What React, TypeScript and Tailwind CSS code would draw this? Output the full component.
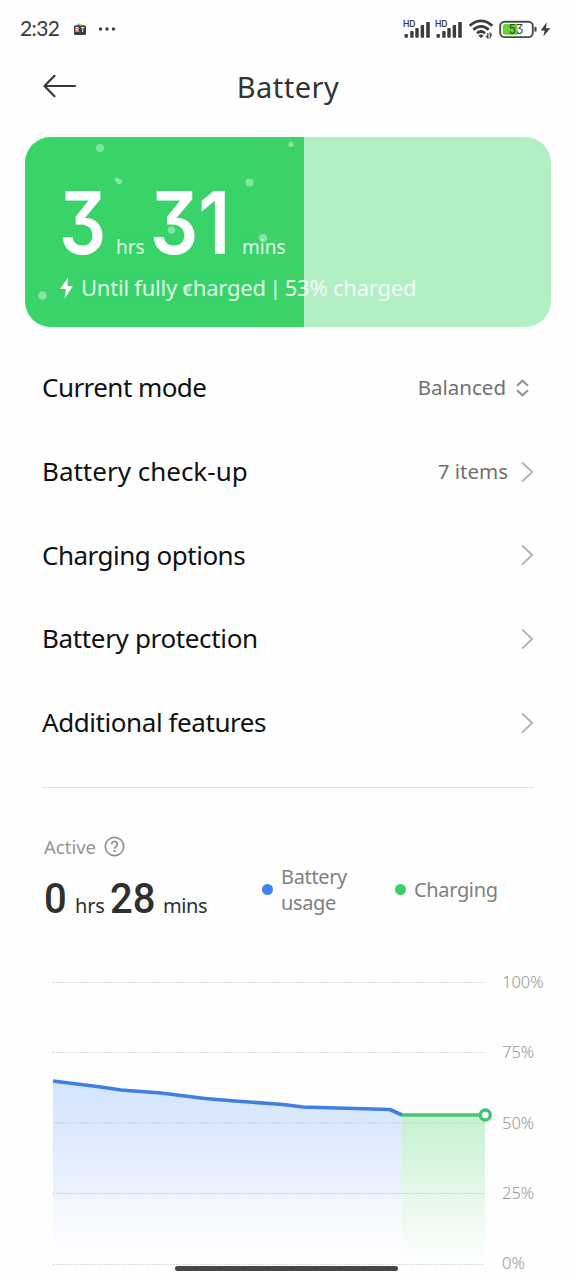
import React from 'react';

const menuItems = [
  { label: 'Current mode', value: 'Balanced', tracking: 'tracking-[-0.55px]', updown: true },
  { label: 'Battery check-up', value: '7 items', tracking: 'tracking-[0px]' },
  { label: 'Charging options', tracking: 'tracking-[-0.5px]' },
  { label: 'Battery protection', tracking: 'tracking-[-0.35px]' },
  { label: 'Additional features', tracking: 'tracking-[-0.43px]' },
];

const bubbles = [
  { x: 75, y: 11, r: 4 },
  { x: 266, y: 7.5, r: 2.7 },
  { x: 94, y: 44.5, r: 2.8 },
  { x: 91.5, y: 42.5, r: 2 },
  { x: 224.5, y: 45.5, r: 4 },
  { x: 146.5, y: 93, r: 3.7 },
  { x: 238, y: 101, r: 4.2 },
  { x: 17.5, y: 158.5, r: 4.3 },
  { x: 162, y: 151.5, r: 4 },
];

const levels = ['100%', '75%', '50%', '25%', '0%'];
const gridLines = [22.5, 92.5, 163, 233.5, 304.5];

function Signal() {
  return (
    <svg className="h-[22px] w-7 shrink-0" viewBox="0 0 28 22" fill="#3c3c3c">
      <text x="0" y="9.3" fontSize="8.6" fontWeight="600" fontFamily="Inter, sans-serif" textLength="12.5">HD</text>
      <rect x="1.5" y="16" width="3.4" height="3.8" rx="0.8" />
      <rect x="7.2" y="13" width="3.4" height="6.8" rx="0.8" />
      <rect x="12.3" y="10" width="3.4" height="9.8" rx="0.8" />
      <rect x="17.7" y="7" width="3.4" height="12.8" rx="0.8" />
      <rect x="23.2" y="4" width="3.6" height="15.8" rx="0.8" />
    </svg>
  );
}

function StatusBar() {
  return (
    <div className="flex h-[58px] items-center text-[#3a3a3a]">
      <span className="ml-5 w-[53px] pb-[3px] font-[Lato] text-[21px] leading-none tracking-[-0.6px]">2:32</span>
      <svg className="h-[14px] w-[14px]" viewBox="0 0 14 14">
        <path d="M2 4.5 6 1l1.5 3.5z" fill="#7f93dc" />
        <path d="M7 1.5 12 3v2H7z" fill="#eadb6c" />
        <rect x="1" y="3.5" width="12" height="9.5" rx="1.2" fill="#3e3b4b" />
        <text x="2.3" y="9.8" fontSize="5.5" fontWeight="700" fill="#fff" fontFamily="Inter, sans-serif" textLength="9">RT</text>
      </svg>
      <svg className="ml-[11px] h-2 w-5" viewBox="0 0 20 8" fill="#3c3c3c">
        <circle cx="2.5" cy="4" r="1.7" />
        <circle cx="9" cy="4" r="1.7" />
        <circle cx="15.5" cy="4" r="1.7" />
      </svg>
      <div className="ml-auto mr-[25px] flex items-center">
        <Signal />
        <span className="w-1" />
        <Signal />
        <svg className="ml-[5px] h-[22px] w-[28px]" viewBox="0 0 28 22" fill="none" stroke="#3c3c3c" strokeWidth="2.8">
          <path d="M1.7 7.7Q13 -2 24.3 7.7" />
          <path d="M5.3 11.7Q13 5 20.7 11.7" />
          <path d="M9 15.2Q13 11.8 17 15.2" />
          <path d="M13 20.2l-2.6-2.8q2.6-1.9 5.2 0z" fill="#3c3c3c" stroke="none" />
          <path d="M19.8 15v4.8l-1.8-1.8M22.2 20.3v-4.8l1.8 1.8" strokeWidth="1.2" />
        </svg>
        <svg className="ml-[3px] h-[19px] w-[39px]" viewBox="0 0 39 18">
          <rect x="1.2" y="1.2" width="32.6" height="15.4" rx="4.4" fill="#fff" stroke="#4b4b4b" strokeWidth="1.9" />
          <path d="M6 3.6h12.5v10.6H6a2.2 2.2 0 0 1-2.2-2.2V5.8A2.2 2.2 0 0 1 6 3.6z" fill="#62d42e" />
          <rect x="35.4" y="6.3" width="2.2" height="5" rx="1.1" fill="#4b4b4b" />
          <text x="9.8" y="13.6" fontSize="13" fill="#3c3c3c" fontFamily="Inter, sans-serif" textLength="14.5" lengthAdjust="spacingAndGlyphs" className="[font-feature-settings:'cv09']">53</text>
        </svg>
        <svg className="ml-[2px] h-[15px] w-[11px]" viewBox="0 0 11 15" fill="#3c3c3c">
          <path d="M6.7 0.3 0.7 8.6h4L3.3 14.6 10.4 6.2H6z" />
        </svg>
      </div>
    </div>
  );
}

function BatteryCard() {
  return (
    <div className="relative mx-[25px] mt-[21px] h-[190px] overflow-hidden rounded-[26px] bg-[#b3efc5] text-white">
      <div className="absolute inset-y-0 left-0 w-[279px] bg-[#39d369]">
        <div className="ml-auto h-full w-[49px] bg-[#3ed369]" />
      </div>
      <div className="relative flex flex-col pl-9 pt-[43px]">
        <div className="flex h-[85px] items-baseline leading-[86px]">
          <span className="-ml-[2px] w-[57px] font-['Inter'] text-[86px] font-semibold"><span className="inline-block origin-left scale-x-[0.86] [font-feature-settings:'cv09']">3</span></span>
          <span className="w-[34px] font-['Noto_Sans'] text-[19px] opacity-85">hrs</span>
          <span className="w-[92px] font-['Inter'] text-[86px] font-semibold"><span className="inline-block origin-left scale-x-[0.88] [font-feature-settings:'cv09']">31</span></span>
          <span className="font-['Noto_Sans'] text-[19px] opacity-85">mins</span>
        </div>
        <div className="flex h-[46px] items-center">
          <svg className="-ml-px mr-[6px] h-[22px] w-[15px]" viewBox="0 0 15 22" fill="#fff">
            <path d="M8 0.5 0 12h6L4.5 21.5 13 9H7.5z" />
          </svg>
          <span className="whitespace-nowrap pb-[2px] font-['Noto_Sans'] text-[22px] tracking-[-0.22px] opacity-85">
            Until fully charged <span className="-mx-[2px] inline-block scale-y-90">|</span> 53% charged
          </span>
        </div>
      </div>
      <svg className="absolute left-0 top-0" width="279" height="190" fill="#fff" fillOpacity="0.38">
        {bubbles.map((b) => (
          <circle key={b.x} cx={b.x} cy={b.y} r={b.r} />
        ))}
      </svg>
    </div>
  );
}

function Chart() {
  return (
    <div className="flex h-[320px]">
      <svg className="shrink-0" width="496" height="320" viewBox="0 0 496 320">
        <defs>
          <linearGradient id="blueFill" x1="0" y1="120" x2="0" y2="305" gradientUnits="userSpaceOnUse">
            <stop offset="0" stopColor="#d3e5fc" />
            <stop offset="0.3" stopColor="#deeafc" />
            <stop offset="0.62" stopColor="#edf3fe" />
            <stop offset="0.66" stopColor="#f4f8ff" />
            <stop offset="1" stopColor="#ffffff" />
          </linearGradient>
          <linearGradient id="greenFill" x1="0" y1="155" x2="0" y2="305" gradientUnits="userSpaceOnUse">
            <stop offset="0" stopColor="#c6f1d0" />
            <stop offset="0.5" stopColor="#e3f8e8" />
            <stop offset="1" stopColor="#ffffff" />
          </linearGradient>
        </defs>
        <path d="M53 121 101 127 121 130 161 133 205 138.5 235 141 283 144.5 303 147 390 149.5 402 155V305H53z" fill="url(#blueFill)" />
        <path d="M402 155H485V305H402z" fill="url(#greenFill)" />
        {gridLines.map((y) => (
          <path key={y} d={`M53 ${y}H485`} stroke="#a9adb5" strokeOpacity="0.6" strokeDasharray="1.5 1.5" />
        ))}
        <path d="M53 121 101 127 121 130 161 133 205 138.5 235 141 283 144.5 303 147 390 149.5 402 155" fill="none" stroke="#3f7fe3" strokeWidth="3.6" strokeLinejoin="round" />
        <path d="M402 155H480" stroke="#48c676" strokeWidth="3.6" />
        <circle cx="485.3" cy="155" r="5" fill="#fff" stroke="#40c670" strokeWidth="3.4" />
      </svg>
      <div className="ml-[6px] mt-[-13.5px] font-['Noto_Sans'] text-[16.5px] font-light text-[#969696]">
        {levels.map((level) => (
          <div key={level} className="flex h-[70.4px] items-center">{level}</div>
        ))}
      </div>
    </div>
  );
}

export default function App() {
  return (
    <div className="relative h-[1280px] w-[576px] overflow-hidden bg-[#fefefe] font-['Noto_Sans',sans-serif]">
      <StatusBar />

      <div className="relative flex h-[58px] items-center justify-center">
        <svg className="absolute left-[43px] top-[16px] h-6 w-[34px]" viewBox="0 0 34 24" fill="none" stroke="#383838" strokeWidth="2.2" strokeLinecap="round" strokeLinejoin="round">
          <path d="M32 12H2M11.5 1.8 1.5 12l10 10.2" />
        </svg>
        <h1 className="text-[29px] tracking-[0.5px] text-[#333]">Battery</h1>
      </div>

      <BatteryCard />

      <div className="mt-[19px] px-[42px]">
        {menuItems.map((item) => (
          <div key={item.label} className="flex h-[83.7px] items-center">
            <span className={`text-[26px] text-[#111] ${item.tracking}`}>{item.label}</span>
            <span className="ml-auto text-[20.5px] text-[#707070]">{item.value}</span>
            {item.updown ? (
              <svg className="ml-[10px] mr-[5px] h-[18px] w-[13px]" viewBox="0 0 13 18" fill="none" stroke="#8d94a3" strokeWidth="2">
                <path d="M1 6.7 6.5 1.7 12 6.7M1 11.3l5.5 5 5.5-5" />
              </svg>
            ) : (
              <svg className="ml-3 h-[22px] w-[14px]" viewBox="0 0 14 22" fill="none" stroke="#b0b0b0" strokeWidth="1.8">
                <path d="M2 1.3 12.2 11 2 20.7" />
              </svg>
            )}
          </div>
        ))}
        <div className="mt-[22.5px] h-px bg-[#e2e2e2]" />
      </div>

      <div className="flex h-[172.5px] pl-[44px] pt-[46px]">
        <div className="w-[218px]">
          <div className="flex h-[26px] items-center text-[18.5px] text-[#949494]">
            <span className="w-[60px]">Active</span>
            <svg className="h-[21px] w-[21px]" viewBox="0 0 21 21" fill="none" stroke="#8f8f8f" strokeWidth="1.7">
              <circle cx="10.5" cy="10.5" r="9.2" />
              <path d="M7.7 8.3a2.8 2.8 0 1 1 4.2 2.4c-.9.5-1.4.9-1.4 2" />
              <path d="M10.5 14v2" strokeWidth="2" />
            </svg>
          </div>
          <div className="mt-[13px] flex h-[50px] items-baseline leading-[50px] text-[#2f2f2f]">
            <span className="w-[31px] font-[Roboto] text-[43px] font-medium"><span className="inline-block origin-left scale-x-[0.93]">0</span></span>
            <span className="w-[35px] text-[20px] tracking-[-0.2px]">hrs</span>
            <span className="w-[53px] font-[Roboto] text-[43px] font-medium"><span className="inline-block origin-left scale-x-[0.93]">28</span></span>
            <span className="text-[20px] tracking-[-0.4px]">mins</span>
          </div>
        </div>
        <div className="mt-[30px] flex h-[52px] items-center text-[20px] leading-[26px] tracking-[-0.35px] text-[#808080]">
          <span className="mr-2 h-[11px] w-[11px] rounded-full bg-[#3a82f7]" />
          <span className="w-[114px]">Battery<br />usage</span>
          <span className="mr-2 h-[11px] w-[11px] rounded-full bg-[#38d067]" />
          <span>Charging</span>
        </div>
      </div>

      <Chart />

      <div className="absolute bottom-[9px] left-[175px] h-[5px] w-[223px] rounded-full bg-[#464646]" />
    </div>
  );
}
